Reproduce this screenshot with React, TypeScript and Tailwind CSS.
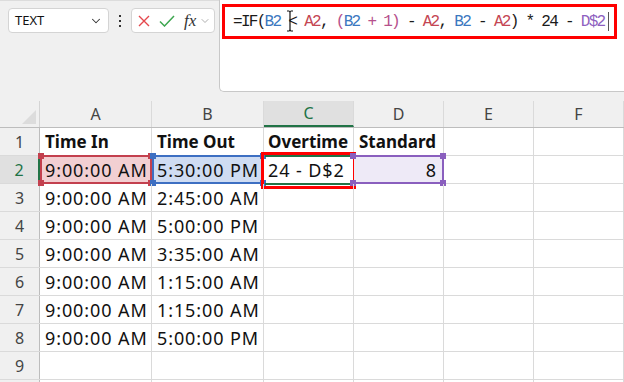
import React from 'react';
import { ChevronDown } from 'lucide-react';

const cols = ['A', 'B', 'C', 'D', 'E', 'F'];
const colW = ['w-[112px]', 'w-[112px]', 'w-[90px]', 'w-[90px]', 'w-[90px]', 'w-[90px]'];

const rows: string[][] = [
  ['Time In', 'Time Out', 'Overtime', 'Standard', '', ''],
  ['9:00:00 AM', '5:30:00 PM', '24 - D$2', '8', '', ''],
  ['9:00:00 AM', '2:45:00 AM', '', '', '', ''],
  ['9:00:00 AM', '5:00:00 PM', '', '', '', ''],
  ['9:00:00 AM', '3:35:00 AM', '', '', '', ''],
  ['9:00:00 AM', '1:15:00 AM', '', '', '', ''],
  ['9:00:00 AM', '1:15:00 AM', '', '', '', ''],
  ['9:00:00 AM', '5:00:00 PM', '', '', '', ''],
  ['', '', '', '', '', ''],
  ['', '', '', '', '', ''],
];

const formula: [string, string][] = [
  ['=IF(', 'text-[#1b1b1b]'],
  ['B2', 'text-[#3b78c0]'],
  [' < ', 'text-[#1b1b1b]'],
  ['A2', 'text-[#c44653]'],
  [', ', 'text-[#1b1b1b]'],
  ['(', 'text-[#b5508c]'],
  ['B2', 'text-[#3b78c0]'],
  [' + 1)', 'text-[#b5508c]'],
  [' - ', 'text-[#1b1b1b]'],
  ['A2', 'text-[#c44653]'],
  [', ', 'text-[#1b1b1b]'],
  ['B2', 'text-[#3b78c0]'],
  [' - ', 'text-[#1b1b1b]'],
  ['A2', 'text-[#c44653]'],
  [') * 24 - ', 'text-[#1b1b1b]'],
  ['D$2', 'text-[#8e5fc0]'],
];

const RefBox: React.FC<{ border: string; bg: string; dot: string; hideLeft?: boolean }> = ({
  border,
  bg,
  dot,
  hideLeft,
}) => (
  <div className={`absolute left-0 top-[-1px] right-[-1px] bottom-[-1px] border-2 ${border} ${bg} ${hideLeft ? 'border-l-0' : ''}`}>
    <span className={`absolute -left-[4px] -top-[4px] w-[6px] h-[6px] ${dot}`} />
    <span className={`absolute -right-[4px] -top-[4px] w-[6px] h-[6px] ${dot}`} />
    <span className={`absolute -left-[4px] -bottom-[4px] w-[6px] h-[6px] ${dot}`} />
    <span className={`absolute -right-[4px] -bottom-[4px] w-[6px] h-[6px] ${dot}`} />
  </div>
);

export default function App() {
  return (
    <div className="w-[624px] h-[382px] overflow-hidden bg-[#f0f0f0] font-['Noto_Sans',sans-serif] text-[#111]">
      {/* formula bar area */}
      <div className="flex h-[101px] border-t border-[#dcdcdc]">
        <div className="flex w-[219px] items-start pl-[8px] pt-[7px]">
          <div className="flex h-[25px] w-[101px] items-center justify-between rounded-[4px] border border-[#d4d4d4] bg-white pl-[6px] pr-[5px]">
            <span className="text-[13px] leading-none text-[#111]">TEXT</span>
            <ChevronDown size={14} strokeWidth={1.8} className="text-[#333]" />
          </div>
          <div className="flex h-[25px] w-[22px] flex-col items-center justify-center gap-[3px]">
            <span className="h-[2px] w-[2px] bg-[#333]" />
            <span className="h-[2px] w-[2px] bg-[#333]" />
            <span className="h-[2px] w-[2px] bg-[#333]" />
          </div>
          <div className="flex h-[25px] w-[84px] items-center rounded-[4px] border border-[#d4d4d4] bg-white pl-[6px]">
            <svg width="12" height="12" viewBox="0 0 12 12" className="mr-[9px]">
              <path d="M1 1 L11 11 M11 1 L1 11" stroke="#e5484d" strokeWidth="1.4" fill="none" />
            </svg>
            <svg width="16" height="12" viewBox="0 0 16 12" className="mr-[9px]">
              <path d="M1 6.5 L5.5 11 L15 1" stroke="#3ea650" strokeWidth="1.5" fill="none" />
            </svg>
            <span className="font-['Liberation_Serif',serif] text-[17px] italic leading-none text-[#333]">fx</span>
            <ChevronDown size={12} strokeWidth={1.6} className="ml-[3px] text-[#999]" />
          </div>
        </div>
        <div className="relative flex-1 self-start h-[92px] -mt-px rounded-bl-[5px] border-l border-b border-[#c8c8c8] bg-white pl-[2px] pt-[4px] pr-[7px]">
          <div className="relative flex h-[35px] items-center border-[3px] border-[#ff0000] pl-[8px]">
            <span className="whitespace-pre font-['Liberation_Mono',monospace] text-[16px] tracking-[-1.7px]">
              {formula.map(([t, c], i) => (
                <span key={i} className={c}>
                  {t}
                </span>
              ))}
            </span>
            <span className="ml-[3px] h-[19px] w-px bg-[#555]" />
            <svg width="8" height="22" viewBox="0 0 8 22" className="absolute left-[61px] top-[3px]">
              <path d="M1 1 H3 Q4 1 4 3 V19 Q4 21 3 21 H1 M7 1 H5 Q4 1 4 3 M4 19 Q4 21 5 21 H7" stroke="#111" strokeWidth="1.2" fill="none" />
            </svg>
          </div>
        </div>
      </div>

      {/* sheet */}
      <div className="flex flex-col">
        <div className="flex h-[27px] border-b border-[#bdbdbd]">
          <div className="relative w-[40px] border-r border-[#d4d4d4]">
            <svg width="14" height="14" viewBox="0 0 14 14" className="absolute right-[3px] bottom-[3px]">
              <path d="M14 0 L14 14 L0 14 Z" fill="#dcdcdc" />
            </svg>
          </div>
          {cols.map((c, i) => (
            <div
              key={c}
              className={`${colW[i]} flex items-center justify-center border-r border-[#dadada] text-[16px] ${
                c === 'C' ? 'bg-[#e0e0e0] border-b-2 border-b-[#217346] text-[#217346]' : 'text-[#444]'
              }`}
            >
              {c}
            </div>
          ))}
        </div>
        {rows.map((r, ri) => (
          <div key={ri} className="flex h-[28px] border-b border-[#dadada] bg-white">
            <div
              className={`flex w-[40px] items-center justify-center border-r text-[16px] ${
                ri === 1
                  ? 'bg-[#e0e0e0] border-r-2 border-r-[#217346] text-[#217346]'
                  : 'bg-[#f0f0f0] border-r-[#bdbdbd] text-[#444]'
              }`}
            >
              {ri < 9 ? ri + 1 : ''}
            </div>
            {r.map((v, ci) => (
              <div
                key={ci}
                className={`${colW[ci]} relative flex items-center border-r border-[#dadada] ${
                  ci === 3 && ri === 1 ? 'justify-end pr-[6px]' : ci === 2 ? 'pl-[4px]' : 'pl-[5px]'
                }`}
              >
                {ri === 1 && ci === 0 && <RefBox border="border-[#c3404e]" bg="bg-[#f2cfd2]" dot="bg-[#c3404e]" />}
                {ri === 1 && ci === 1 && <RefBox border="border-[#3d6fc2]" bg="bg-[#cfdcf2]" dot="bg-[#3d6fc2]" />}
                {ri === 1 && ci === 3 && <RefBox border="border-[#8a5fbe]" bg="bg-[#eeeaf7]" dot="bg-[#8a5fbe]" hideLeft />}
                {ri === 1 && ci === 2 && (
                  <div className="absolute -left-[3px] -top-[4px] -right-[3px] -bottom-[6px] border-[3px] border-[#ff0000]">
                    <div className="absolute left-[1px] right-[1px] top-0 h-[2px] bg-[#217346]" />
                    <div className="absolute left-[1px] right-[1px] bottom-[1px] h-[2px] bg-[#217346]" />
                  </div>
                )}
                <span
                  className={`relative whitespace-nowrap leading-none ${
                    ri === 0 ? 'text-[17px] font-bold' : 'text-[18px] tracking-[0.9px]'
                  }`}
                >
                  {v}
                </span>
              </div>
            ))}
          </div>
        ))}
      </div>
    </div>
  );
}
